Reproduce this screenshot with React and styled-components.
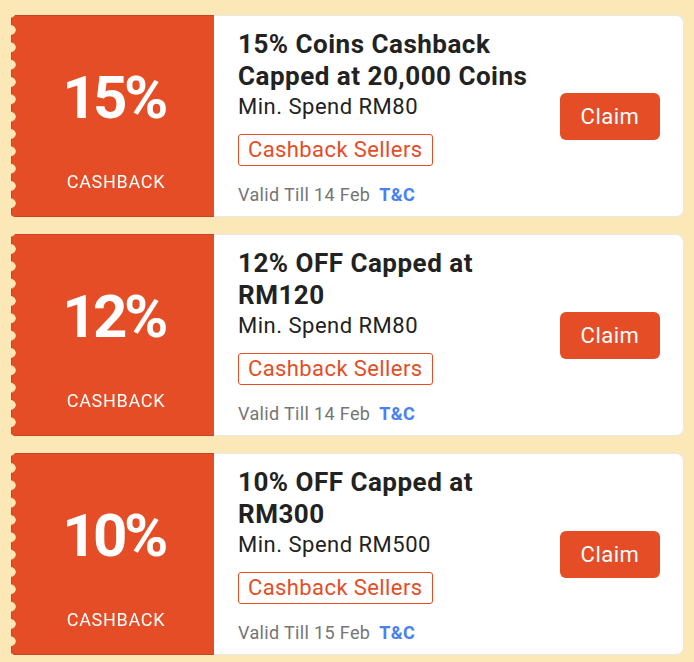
import React from "react";
import styled, { createGlobalStyle } from "styled-components";

const GlobalStyle = createGlobalStyle`
  html, body {
    margin: 0;
    padding: 0;
    background: #fbe8b6;
  }
  body {
    font-family: Roboto, "Noto Sans", "Liberation Sans", sans-serif;
    -webkit-font-smoothing: antialiased;
  }
`;

const Page = styled.div`
  display: flex;
  flex-direction: column;
  gap: 17px;
  padding: 15px 10px 6px 11px;
  background: #fbe8b6;
  min-height: 662px;
  box-sizing: border-box;
`;

const Card = styled.div`
  display: flex;
  height: 202px;
`;

const Stub = styled.div`
  width: 203px;
  flex: none;
  box-sizing: border-box;
  background: #e54d26;
  border: 1px solid #c9441f;
  border-right: none;
  border-radius: 3px 0 0 3px;
  display: flex;
  flex-direction: column;
  align-items: center;
  padding: 50px 0 22px 6px;
  color: #fff;
  -webkit-mask-image: radial-gradient(circle at 0 50%, transparent 4.4px, #000 5px);
  -webkit-mask-size: 100% 17.33px;
  -webkit-mask-repeat: repeat-y;
  -webkit-mask-position: 0 6.33px;
  mask-image: radial-gradient(circle at 0 50%, transparent 4.4px, #000 5px);
  mask-size: 100% 17.33px;
  mask-repeat: repeat-y;
  mask-position: 0 6.33px;
`;

const Rate = styled.div`
  font-size: 60px;
  line-height: 64px;
  font-weight: 700;
  letter-spacing: -3.5px;
  margin-right: 5px;
`;

const RateLabel = styled.div`
  margin-top: auto;
  font-size: 18px;
  line-height: 24px;
  font-weight: 400;
  letter-spacing: 0.7px;
`;

const Body = styled.div`
  flex: 1;
  display: flex;
  align-items: center;
  gap: 20px;
  background: #fff;
  border: 1px solid #e8e8e8;
  border-left: none;
  border-radius: 0 8px 8px 0;
  padding: 0 23px 0 24px;
  box-sizing: border-box;
`;

const Info = styled.div`
  flex: 1;
  align-self: stretch;
  display: flex;
  flex-direction: column;
  align-items: flex-start;
  padding-top: 12px;
`;

const Title = styled.div`
  font-size: 26px;
  line-height: 32px;
  font-weight: 700;
  letter-spacing: 0.5px;
  color: #222;
`;

const MinSpend = styled.div`
  font-size: 22px;
  line-height: 30px;
  letter-spacing: 0.5px;
  color: #222;
`;

const Tag = styled.div`
  margin-top: 12px;
  border: 1px solid #e54d26;
  border-radius: 3px;
  padding: 0 9px;
  font-size: 22px;
  line-height: 30px;
  letter-spacing: 0.4px;
  color: #e54d26;
`;

const Validity = styled.div`
  margin-top: 17px;
  font-size: 18px;
  line-height: 24px;
  letter-spacing: 0.35px;
  color: #757575;
  display: flex;
  gap: 9px;
`;

const Terms = styled.span`
  color: #4a80f0;
  font-weight: 700;
`;

const ClaimButton = styled.button`
  flex: none;
  width: 100px;
  height: 47px;
  border: none;
  border-radius: 6px;
  background: #e54d26;
  color: #fff;
  font-family: Roboto, "Noto Sans", "Liberation Sans", sans-serif;
  font-size: 22px;
  letter-spacing: 0.5px;
  padding: 0;
  cursor: pointer;
`;

const vouchers = [
  {
    rate: "15%",
    title: "15% Coins Cashback Capped at 20,000 Coins",
    min: "Min. Spend RM80",
    valid: "Valid Till 14 Feb",
  },
  {
    rate: "12%",
    title: "12% OFF Capped at RM120",
    min: "Min. Spend RM80",
    valid: "Valid Till 14 Feb",
  },
  {
    rate: "10%",
    title: "10% OFF Capped at RM300",
    min: "Min. Spend RM500",
    valid: "Valid Till 15 Feb",
  },
];

export default function App() {
  return (
    <>
      <GlobalStyle />
      <Page>
        {vouchers.map((v) => (
          <Card key={v.rate}>
            <Stub>
              <Rate>{v.rate}</Rate>
              <RateLabel>CASHBACK</RateLabel>
            </Stub>
            <Body>
              <Info>
                <Title>{v.title}</Title>
                <MinSpend>{v.min}</MinSpend>
                <Tag>Cashback Sellers</Tag>
                <Validity>
                  <span>{v.valid}</span>
                  <Terms>T&amp;C</Terms>
                </Validity>
              </Info>
              <ClaimButton>Claim</ClaimButton>
            </Body>
          </Card>
        ))}
      </Page>
    </>
  );
}
